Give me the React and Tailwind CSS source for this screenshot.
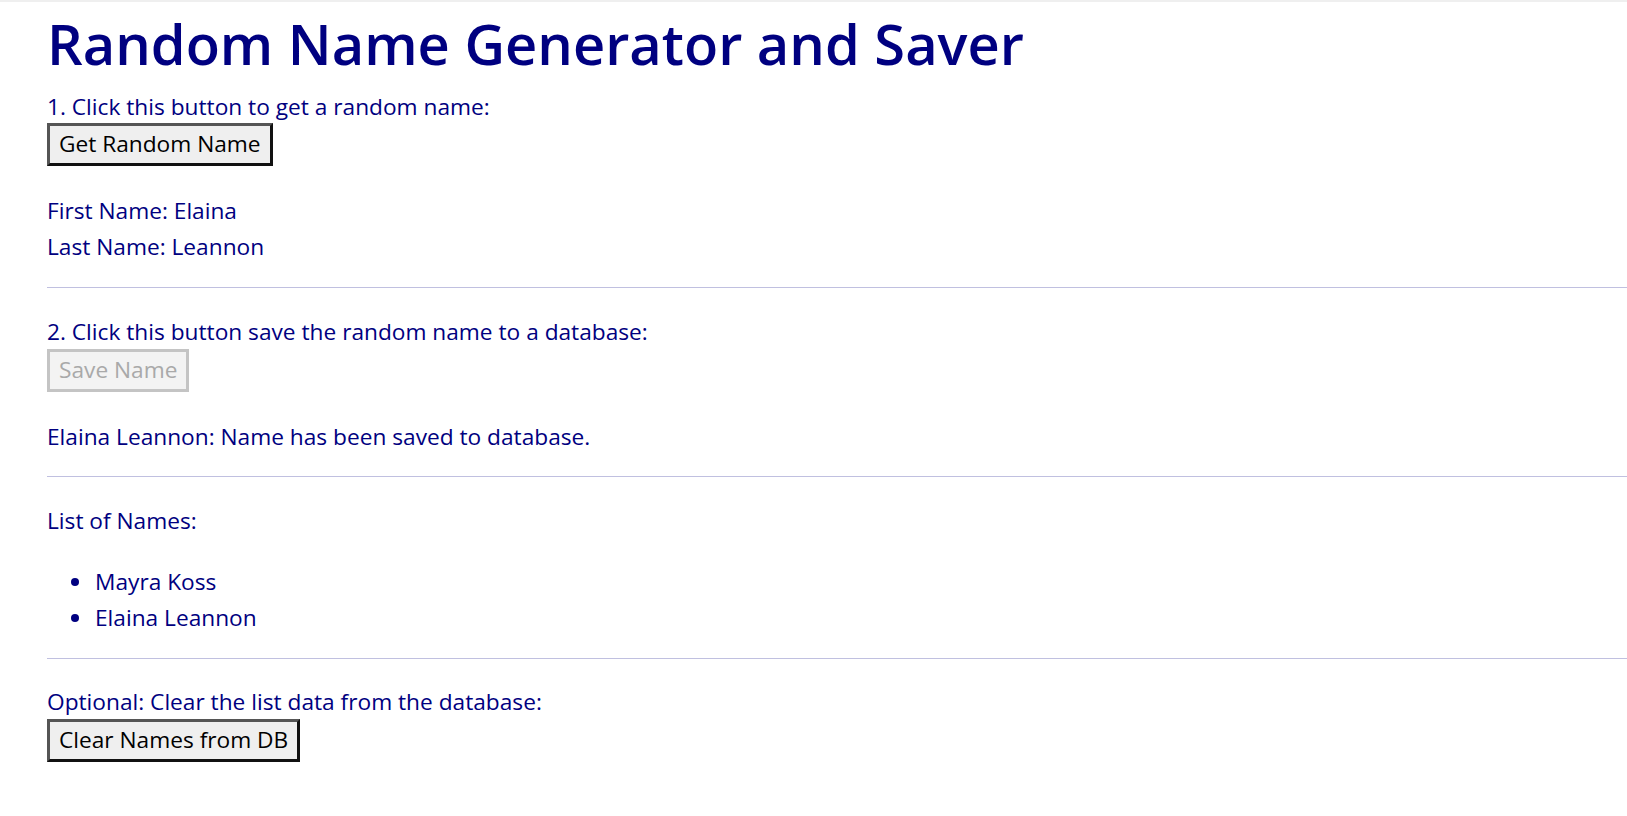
import React from 'react';

const font = { fontFamily: '"Open Sans", "Noto Sans", sans-serif' };

function Btn({ children, disabled }) {
	return (
		<button
			disabled={disabled}
			className={
				disabled
					? 'h-[43px] px-[9px] bg-[#f3f3f3] text-[#a9a9a9] text-[22.7px] border-[3px] border-[#c4c4c4]'
					: 'h-[43px] px-[9px] bg-[#efefef] text-black text-[22.7px] border-[3px] border-t-[#555555] border-l-[#555555] border-r-[#111111] border-b-[#111111]'
			}
		>
			{children}
		</button>
	);
}

export default function App() {
	const names = ['Mayra Koss', 'Elaina Leannon'];
	return (
		<div className="min-h-screen bg-white border-t-2 border-[#efefef] pl-[47px] text-[#000080]" style={font}>
			<h1 className="mt-[5px] text-[56px] leading-[72px] font-semibold">Random Name Generator and Saver</h1>

			<p className="mt-[14px] text-[22.7px] leading-[28px]">1. Click this button to get a random name:</p>
			<div className="mt-[2px]">
				<Btn>Get Random Name</Btn>
			</div>
			<p className="mt-[27px] text-[22.7px] leading-[36px]">First Name: Elaina</p>
			<p className="text-[22.7px] leading-[36px]">Last Name: Leannon</p>

			<hr className="mt-[22px] border-0 border-t border-[#c0c0e0]" />

			<p className="mt-[30px] text-[22.7px] leading-[28px]">2. Click this button save the random name to a database:</p>
			<div className="mt-[3px]">
				<Btn disabled>Save Name</Btn>
			</div>
			<p className="mt-[31px] text-[22.7px] leading-[28px]">Elaina Leannon: Name has been saved to database.</p>

			<hr className="mt-[25px] border-0 border-t border-[#c0c0e0]" />

			<p className="mt-[30px] text-[22.7px] leading-[28px]">List of Names:</p>
			<ul className="mt-[29px]">
				{names.map(n => (
					<li key={n} className="flex items-center text-[22.7px] leading-[36px]">
						<span className="ml-[24px] w-[8px] h-[8px] rounded-full bg-[#000080]"></span>
						<span className="ml-[16px]">{n}</span>
					</li>
				))}
			</ul>

			<hr className="mt-[22px] border-0 border-t border-[#c0c0e0]" />

			<p className="mt-[29px] text-[22.7px] leading-[28px]">Optional: Clear the list data from the database:</p>
			<div className="mt-[3px]">
				<Btn>Clear Names from DB</Btn>
			</div>
		</div>
	);
}
